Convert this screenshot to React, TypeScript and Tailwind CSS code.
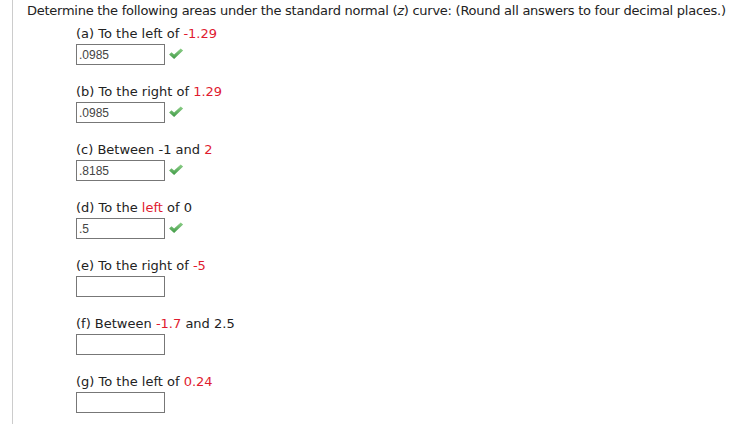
import React from "react";

type Part = { text: string; red?: boolean };

type Item = {
  key: string;
  label: Part[];
  answer?: string;
};

const ITEMS: Item[] = [
  { key: "a", label: [{ text: "(a) To the left of " }, { text: "-1.29", red: true }], answer: ".0985" },
  { key: "b", label: [{ text: "(b) To the right of " }, { text: "1.29", red: true }], answer: ".0985" },
  { key: "c", label: [{ text: "(c) Between -1 and " }, { text: "2", red: true }], answer: ".8185" },
  {
    key: "d",
    label: [{ text: "(d) To the " }, { text: "left", red: true }, { text: " of 0" }],
    answer: ".5",
  },
  { key: "e", label: [{ text: "(e) To the right of " }, { text: "-5", red: true }] },
  {
    key: "f",
    label: [{ text: "(f) Between " }, { text: "-1.7", red: true }, { text: " and 2.5" }],
  },
  { key: "g", label: [{ text: "(g) To the left of " }, { text: "0.24", red: true }] },
];

function Check() {
  return (
    <svg width="16" height="12" viewBox="0 0 15 12" className="ml-[3px] mt-[4px]">
      <defs>
        <linearGradient id="ck" x1="0" y1="0" x2="0" y2="1">
          <stop offset="0" stopColor="#8fd08a" />
          <stop offset="1" stopColor="#3f9a45" />
        </linearGradient>
      </defs>
      <path d="M0.6 6.4 L3 4.2 L5.6 6.6 L12.2 0.4 L14.6 2.6 L5.6 11 Z" fill="url(#ck)" />
    </svg>
  );
}

export default function App() {
  return (
    <div className="h-[424px] w-[744px] overflow-hidden bg-white">
      <div className="ml-3 h-full border-l border-[#cccccc] pl-[14px] pt-[3px] font-['DejaVu_Sans',Verdana,sans-serif] text-[13px] leading-[16px] text-[#222]">
        <p className="whitespace-nowrap tracking-[-0.26px]">
          Determine the following areas under the standard normal (<i>z</i>) curve: (Round all answers to four
          decimal places.)
        </p>
        <div className="mt-[7px] flex flex-col gap-[19px] pl-[49px]">
          {ITEMS.map((item) => (
            <div key={item.key} className="flex flex-col">
              <div className="whitespace-nowrap">
                {item.label.map((p, i) => (
                  <span key={i} className={p.red ? "text-[#e01b2f]" : undefined}>
                    {p.text}
                  </span>
                ))}
              </div>
              <div className="mt-[2px] flex items-start">
                <input
                  readOnly
                  value={item.answer ?? ""}
                  className="h-[21px] w-[89px] border border-[#777] bg-white px-[2px] font-['Liberation_Sans',Arial,sans-serif] text-[12px] text-[#444] outline-none"
                />
                {item.answer && <Check />}
              </div>
            </div>
          ))}
        </div>
      </div>
    </div>
  );
}
